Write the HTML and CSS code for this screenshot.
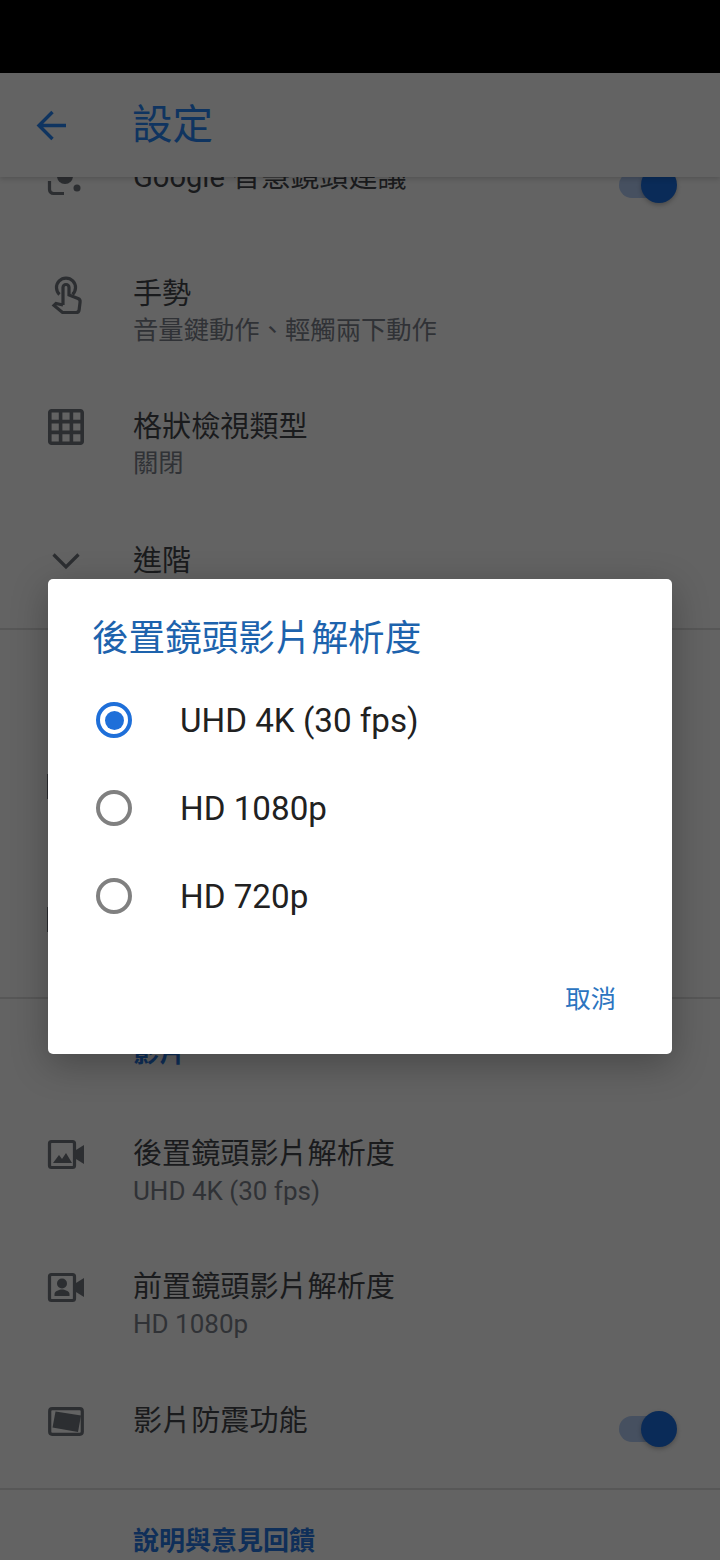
FILE: index.html
```html
<!DOCTYPE html>
<html lang="zh-Hant">

<head>
  <meta charset="UTF-8">
  <title>設定</title>
  <link rel="stylesheet" href="styles.css">
</head>

<body>
  <div class="status-bar"></div>

  <header class="app-bar">
    <svg class="back-icon" viewBox="0 0 48 48"><path d="M38 24.500H11M24.500 11L11 24.500 24.500 38"/></svg>
    <h1 class="app-title">設定</h1>
  </header>

  <main class="settings">
    <section class="group group-first">
      <div class="row row-single">
        <svg class="icon" viewBox="0 0 48 48">
          <path class="line" d="M7.500 20V10a4 4 0 0 1 4-4H20M7.500 28v8.500a4 4 0 0 0 4 4H22"/>
          <circle cx="23" cy="23" r="8"/>
          <circle cx="35" cy="35" r="3.500"/>
          <circle cx="35" cy="22" r="2"/>
        </svg>
        <div class="row-text">
          <div class="row-title">Google 智慧鏡頭建議</div>
        </div>
        <div class="toggle"><span class="toggle-thumb"></span></div>
      </div>

      <div class="row">
        <svg class="icon" viewBox="0 0 48 48">
          <path class="line" d="M17.500 24.500a9.500 9.500 0 1 1 13 0"/>
          <path class="line" d="M21 35V17.500a3 3 0 0 1 6 0V25l9 3.500c1.500.6 2.300 2 2.100 3.500l-1 8c-.2 1.500-1.500 2.500-3 2.500H20.500l-8.500-7 2-2 7 1.500"/>
        </svg>
        <div class="row-text">
          <div class="row-title">手勢</div>
          <div class="row-sub">音量鍵動作、輕觸兩下動作</div>
        </div>
      </div>

      <div class="row">
        <svg class="icon" viewBox="-1.33 -1.33 26.67 26.67"><path d="M20 2H4c-1.100 0-2 .9-2 2v16c0 1.100.9 2 2 2h16c1.100 0 2-.9 2-2V4c0-1.100-.9-2-2-2zM8 20H4v-4h4v4zm0-6H4v-4h4v4zm0-6H4V4h4v4zm6 12h-4v-4h4v4zm0-6h-4v-4h4v4zm0-6h-4V4h4v4zm6 12h-4v-4h4v4zm0-6h-4v-4h4v4zm0-6h-4V4h4v4z"/></svg>
        <div class="row-text">
          <div class="row-title">格狀檢視類型</div>
          <div class="row-sub">關閉</div>
        </div>
      </div>

      <div class="row row-single">
        <svg class="icon" viewBox="0 0 48 48"><path class="line" d="M11.500 17.500L24 30 36.500 17.500"/></svg>
        <div class="row-text">
          <div class="row-title">進階</div>
        </div>
      </div>
    </section>

    <!-- this group is behind the dialog, only the icon edges show -->
    <section class="group group-hidden">
      <div class="group-head"></div>
      <div class="row">
        <svg class="icon" viewBox="0 0 48 48"><rect x="5" y="12" width="10" height="25"/></svg>
      </div>
      <div class="row row-single">
        <svg class="icon" viewBox="0 0 48 48"><rect x="5" y="12" width="10" height="25"/></svg>
      </div>
    </section>

    <section class="group">
      <div class="group-head">影片</div>

      <div class="row">
        <svg class="icon" viewBox="0 0 48 48">
          <rect class="line" x="7.500" y="11.500" width="25" height="26" rx="2"/>
          <path d="M34 20l8-5v19l-8-5z"/>
          <path d="M11 33l6-8 3 4 4-6 6 10z"/>
        </svg>
        <div class="row-text">
          <div class="row-title">後置鏡頭影片解析度</div>
          <div class="row-sub row-sub-latin">UHD 4K (30 fps)</div>
        </div>
      </div>

      <div class="row">
        <svg class="icon" viewBox="0 0 48 48">
          <rect class="line" x="7.500" y="11.500" width="25" height="26" rx="2"/>
          <path d="M34 20l8-5v19l-8-5z"/>
          <circle cx="20" cy="20.500" r="5"/>
          <path d="M12.500 33v-2c0-3 5-4.500 7.500-4.500s7.500 1.500 7.500 4.500v2z"/>
        </svg>
        <div class="row-text">
          <div class="row-title">前置鏡頭影片解析度</div>
          <div class="row-sub row-sub-latin">HD 1080p</div>
        </div>
      </div>

      <div class="row row-single">
        <svg class="icon" viewBox="0 0 48 48">
          <rect class="line" x="7.700" y="11.700" width="32.600" height="25.600" rx="2.500"/>
          <path d="M13.500 14.500l25.500 4-3 16.500L10.500 30.500z"/>
        </svg>
        <div class="row-text">
          <div class="row-title">影片防震功能</div>
        </div>
        <div class="toggle"><span class="toggle-thumb"></span></div>
      </div>
    </section>

    <section class="group">
      <div class="group-head group-head-last">說明與意見回饋</div>
    </section>
  </main>

  <div class="dialog">
    <h2 class="dialog-title">後置鏡頭影片解析度</h2>
    <div class="option">
      <span class="radio radio-on"></span>
      <span class="option-label">UHD 4K (30 fps)</span>
    </div>
    <div class="option">
      <span class="radio"></span>
      <span class="option-label">HD 1080p</span>
    </div>
    <div class="option">
      <span class="radio"></span>
      <span class="option-label">HD 720p</span>
    </div>
    <div class="dialog-actions">
      <span class="cancel">取消</span>
    </div>
  </div>
</body>

</html>
```

FILE: styles.css
```css
* {
  box-sizing: border-box;
}

body {
  margin: 0;
  width: 720px;
  height: 1560px;
  overflow: hidden;
  display: flex;
  flex-direction: column;
  position: relative;
  background-color: #636363;
  font-family: Roboto, "Noto Sans CJK TC", sans-serif;
}

.status-bar {
  height: 73px;
  flex: none;
  background-color: #000000;
}

.app-bar {
  height: 104px;
  flex: none;
  display: flex;
  align-items: center;
  gap: 56px;
  padding-left: 28px;
  position: relative;
  z-index: 1;
  background-color: #636363;
  box-shadow: 0 2px 5px rgba(0, 0, 0, 0.16);
}

.back-icon {
  width: 48px;
  height: 48px;
  fill: none;
  stroke: #0f3460;
  stroke-width: 3.4;
}

.app-title {
  margin: 0 0 7px;
  font-size: 40.500px;
  font-weight: 400;
  color: #0f3460;
}

.settings {
  flex: 1;
  overflow: hidden;
}

.group {
  border-top: 2px solid #575757;
}

.group-first {
  border-top: 0;
  margin-top: -50px;
}

.group-hidden {
  padding-bottom: 11.500px;
}

.group-hidden .group-head {
  height: 106px;
}

.group-head {
  height: 104.500px;
  padding: 35px 0 0 133px;
  font-size: 26px;
  line-height: 38px;
  font-weight: 700;
  color: #0f2f59;
}

.group-head-last {
  padding-top: 32px;
}

.row {
  display: flex;
  min-height: 133.33px;
  padding: 26px 43px 0 42px;
}

.row-single {
  min-height: 117px;
}

.icon {
  width: 48px;
  height: 48px;
  flex: none;
  fill: #2c2e31;
}

.icon .line {
  fill: none;
  stroke: #2c2e31;
  stroke-width: 3.2;
}

.row-text {
  margin-left: 43px;
  padding-top: 5px;
}

.row-title {
  font-size: 29.100px;
  line-height: 38px;
  color: #1a1b1d;
}

.row-sub {
  font-size: 25.330px;
  line-height: 36px;
  color: #303236;
}

.row-sub-latin {
  font-size: 26px;
}

.toggle {
  width: 52px;
  height: 26px;
  margin-left: auto;
  margin-top: 19px;
  border-radius: 13px;
  background-color: #465060;
  position: relative;
  left: -6px;
}

.toggle-thumb {
  position: absolute;
  top: -5px;
  right: -6px;
  width: 36px;
  height: 36px;
  border-radius: 50%;
  background-color: #0a2b58;
  box-shadow: 0 2px 4px rgba(0, 0, 0, 0.25);
}

.dialog {
  position: absolute;
  left: 48px;
  top: 579px;
  width: 624px;
  height: 475px;
  padding-top: 35px;
  border-radius: 5px;
  background-color: #ffffff;
  box-shadow: 0 10px 36px rgba(0, 0, 0, 0.28);
}

.dialog-title {
  margin: 0 0 12px 44px;
  font-size: 36.600px;
  line-height: 50px;
  font-weight: 400;
  color: #1d63ad;
}

.option {
  display: flex;
  align-items: center;
  height: 88px;
  padding-left: 48px;
  gap: 48px;
  font-size: 33.200px;
  color: #212121;
}

.option-label {
  padding-top: 1px;
}

.radio {
  width: 36px;
  height: 36px;
  flex: none;
  border: 4px solid #808080;
  border-radius: 50%;
  display: flex;
  align-items: center;
  justify-content: center;
}

.radio-on {
  border-color: #1e6fd9;
}

.radio-on::after {
  content: "";
  width: 19px;
  height: 19px;
  border-radius: 50%;
  background-color: #1e6fd9;
}

.dialog-actions {
  display: flex;
  justify-content: flex-end;
  margin-top: 42px;
  padding-right: 56px;
}

.cancel {
  font-size: 25.330px;
  line-height: 36px;
  color: #2b74c0;
}
```
